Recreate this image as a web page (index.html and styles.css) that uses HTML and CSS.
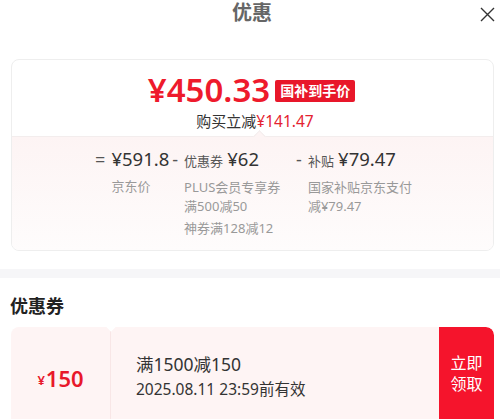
FILE: index.html
```html
<!DOCTYPE html>
<html lang="zh-CN">
<head>
    <meta charset="UTF-8">
    <meta name="viewport" content="width=device-width, initial-scale=1.0">
    <title>优惠</title>
    <link rel="stylesheet" href="styles.css">
</head>
<body>

<div class="sheet">
    <header class="top">
        <h1>优惠</h1>
        <button class="close" aria-label="关闭">
            <svg width="15" height="15" viewBox="0 0 15 15">
                <path d="M1 1 L14 14 M14 1 L1 14" stroke="#333" stroke-width="1.4" fill="none"/>
            </svg>
        </button>
    </header>

    <section class="summary">
        <div class="final">
            <div class="price-line">
                <span class="price">¥450.33</span>
                <span class="tag">国补到手价</span>
            </div>
            <p class="saving">购买立减<em>¥141.47</em></p>
        </div>
        <div class="calc">
            <div class="term">
                <span class="op">=</span>
                <div class="term-body">
                    <div class="head"><b>¥591.8</b></div>
                    <div class="note">京东价</div>
                </div>
            </div>
            <div class="term">
                <span class="op">-</span>
                <div class="term-body wide">
                    <div class="head"><small>优惠券</small> <b>¥62</b></div>
                    <div class="note">PLUS会员专享券满500减50</div>
                    <div class="note">神券满128减12</div>
                </div>
            </div>
            <div class="term">
                <span class="op">-</span>
                <div class="term-body wider">
                    <div class="head"><small>补贴</small> <b>¥79.47</b></div>
                    <div class="note">国家补贴京东支付减¥79.47</div>
                </div>
            </div>
        </div>
    </section>

    <div class="gap"></div>

    <section class="coupons">
        <h2>优惠券</h2>
        <div class="coupon">
            <div class="coupon-value"><small>¥</small>150</div>
            <div class="coupon-info">
                <p class="rule">满1500减150</p>
                <p class="expire">2025.08.11 23:59前有效</p>
            </div>
            <button class="grab">立即<br>领取</button>
        </div>
    </section>
</div>

</body>
</html>
```

FILE: styles.css
```css
body {
    margin: 0;
    background-color: white;
    font-family: "Noto Sans", "Noto Sans CJK SC", sans-serif;
    color: #333;
}
.sheet {
    width: 500px;
    height: 419px;
    overflow: hidden;
}
.top {
    display: flex;
    justify-content: center;
    align-items: center;
    height: 26px;
    position: relative;
}
.top h1 {
    margin: 0;
    font-size: 20px;
    line-height: 26px;
    font-weight: bold;
    color: #666;
    padding-left: 4px;
}
.close {
    position: absolute;
    right: 5px;
    top: 7px;
    border: none;
    background: none;
    padding: 0;
    width: 15px;
    height: 15px;
}
.summary {
    margin: 33px 6px 0 11px;
    border: 1px solid #eee;
    border-radius: 8px;
    overflow: hidden;
}
.final {
    padding: 10px 0 5px;
    text-align: center;
}
.price-line {
    display: flex;
    justify-content: center;
    align-items: center;
    height: 40px;
    padding-right: 2px;
}
.price {
    font-size: 33px;
    font-weight: 600;
    color: #ee1a2c;
    line-height: 40px;
}
.tag {
    margin-left: 5px;
    margin-top: 1px;
    background-color: #e8172a;
    color: white;
    font-size: 14px;
    font-weight: bold;
    line-height: 22px;
    padding: 0 5px;
    border-radius: 2px;
}
.saving {
    margin: 1px 0 0;
    font-size: 15px;
    line-height: 20px;
    color: #333;
    padding-left: 5px;
}
.saving em {
    font-style: normal;
    font-size: 15.5px;
    color: #e42230;
}
.calc {
    position: relative;
    display: flex;
    justify-content: center;
    padding: 10px 0 12px 4px;
    border-top: 1px solid #f3eded;
    background: linear-gradient(#fdf4f4, #fefcfc);
}
.calc::before {
    content: "";
    position: absolute;
    top: -5px;
    left: 243px;
    width: 8px;
    height: 8px;
    background-color: #fdf4f4;
    border-top: 1px solid #f3eded;
    border-left: 1px solid #f3eded;
    transform: rotate(45deg);
}
.term {
    display: flex;
    margin-right: 3px;
}
.term:last-child {
    margin-right: 0;
}
.op {
    font-size: 18px;
    line-height: 24px;
    color: #555;
    margin-right: 6px;
}
.term-body.wide {
    width: 109px;
}
.term-body.wider {
    width: 106px;
}
.head {
    line-height: 24px;
    white-space: nowrap;
}
.head b {
    font-size: 18.5px;
    font-weight: normal;
    color: #333;
}
.head small {
    font-size: 13px;
    color: #555;
}
.note {
    margin-top: 5px;
    font-size: 13px;
    line-height: 19px;
    color: #999;
}
.note + .note {
    margin-top: 3px;
}
.gap {
    margin-top: 18px;
    height: 9px;
    background-color: #f6f6f8;
}
.coupons {
    padding: 16px 6px 0 11px;
}
.coupons h2 {
    margin: 0 0 9px -1px;
    font-size: 18px;
    line-height: 24px;
    font-weight: bold;
    color: #222;
}
.coupon {
    display: flex;
    height: 100px;
    border-radius: 8px 8px 0 0;
    overflow: hidden;
    background-color: #fef4f4;
}
.coupon-value {
    position: relative;
    width: 99px;
    display: flex;
    justify-content: center;
    align-items: center;
    font-size: 22px;
    font-weight: 600;
    color: #e8182a;
    border-right: 1px solid #f8e6e6;
    padding-top: 1px;
}
.coupon-value small {
    font-size: 13px;
    margin-top: 5px;
    margin-right: 1px;
}
.coupon-value::after {
    content: "";
    position: absolute;
    top: -5px;
    right: -5px;
    width: 8px;
    height: 8px;
    background-color: white;
    transform: rotate(45deg);
}
.coupon-info {
    flex: 1;
    display: flex;
    flex-direction: column;
    justify-content: center;
    padding-left: 25px;
    padding-bottom: 3px;
}
.coupon-info p {
    margin: 0;
    color: #333;
}
.rule {
    font-size: 17.5px;
    line-height: 26px;
}
.expire {
    font-size: 15.5px;
    line-height: 24px;
}
.grab {
    width: 55px;
    border: none;
    background-color: #f5142c;
    color: white;
    font-family: inherit;
    font-size: 16px;
    line-height: 21px;
    padding: 0 0 6px;
    border-top-right-radius: 8px;
}
```
